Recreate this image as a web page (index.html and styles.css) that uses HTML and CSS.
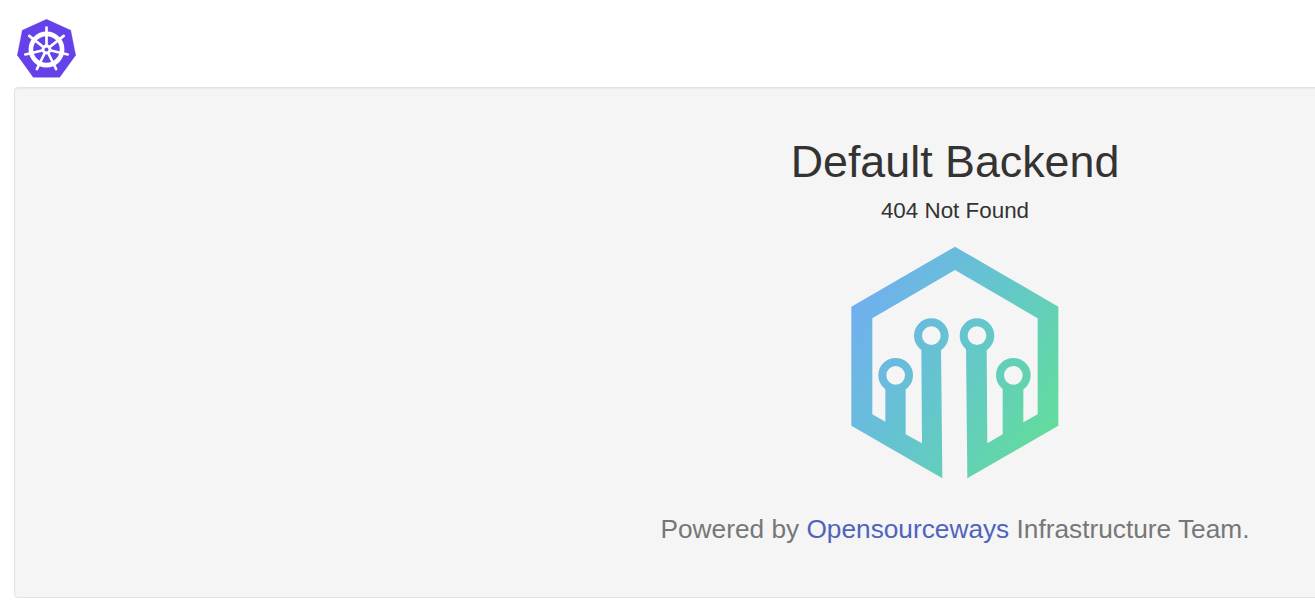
FILE: index.html
```html
<!DOCTYPE html>
<html lang="en">
<head>
<meta charset="utf-8">
<title>Default Backend</title>
<link rel="stylesheet" href="styles.css">
</head>
<body>
<header class="topbar">
  <svg class="k8s-logo" viewBox="51 56 178 178" aria-label="Kubernetes logo">
    <path class="k8s-hept" d="M140 57 L213 90 L228 165 L180 232 L100 232 L52 165 L67 90 Z"/>
    <circle class="k8s-ring" cx="140" cy="148" r="47"/>
    <g class="k8s-spokes">
      <path d="M140 148 V82"/>
      <path d="M140 148 L192 107"/>
      <path d="M140 148 L204 163"/>
      <path d="M140 148 L169 207"/>
      <path d="M140 148 L111 207"/>
      <path d="M140 148 L76 163"/>
      <path d="M140 148 L88 107"/>
    </g>
    <circle class="k8s-hub" cx="140" cy="148" r="15"/>
    <circle class="k8s-dot" cx="140" cy="148" r="6"/>
  </svg>
</header>
<main class="panel">
  <h1 class="title">Default Backend</h1>
  <p class="status">404 Not Found</p>
  <svg class="brand" viewBox="0 0 690 750" aria-label="Opensourceways logo">
    <defs>
      <linearGradient id="brandgrad" gradientUnits="userSpaceOnUse" x1="34" y1="215" x2="655" y2="572">
        <stop offset="0" stop-color="#70aff0"/>
        <stop offset="0.5" stop-color="#64c6cc"/>
        <stop offset="1" stop-color="#62dd9b"/>
      </linearGradient>
    </defs>
    <path fill="url(#brandgrad)" d="M345 35 L655 215 L655 572 L382 730 L378 330 L440 330 L442 625 L488 598 L488 450 L550 450 L550 562 L593 538 L593 250 L345 105 L97 250 L97 538 L136 560 L136 450 L197 450 L197 598 L246 625 L244 330 L303 330 L307 730 L34 572 L34 215 Z"/>
    <g class="brand-rings" stroke="url(#brandgrad)">
      <circle cx="274" cy="302" r="40"/>
      <circle cx="411" cy="302" r="40"/>
      <circle cx="167" cy="421" r="40"/>
      <circle cx="520" cy="421" r="40"/>
    </g>
  </svg>
  <p class="credit">Powered by <a class="credit-link" href="#">Opensourceways</a> Infrastructure Team.</p>
</main>
</body>
</html>
```
FILE: styles.css
```css
html, body {
  margin: 0;
  padding: 0;
  height: 100%;
  overflow: hidden;
  background: #fff;
  font-family: "Liberation Sans", Arial, sans-serif;
}

.topbar {
  height: 87px;
  box-sizing: border-box;
  padding: 19px 0 0 17px;
}

.k8s-logo {
  display: block;
  width: 59px;
  height: 59px;
}

.k8s-hept { fill: #6441e8; stroke: #6441e8; stroke-width: 1; stroke-linejoin: round; }
.k8s-ring { fill: none; stroke: #fff; stroke-width: 14; }
.k8s-spokes path { fill: none; stroke: #fff; stroke-width: 8; stroke-linecap: round; }
.k8s-hub { fill: #fff; }
.k8s-dot { fill: #6441e8; }

.panel {
  box-sizing: border-box;
  width: 1882px;
  height: 511px;
  margin-left: 14px;
  background: #f5f5f5;
  border: 1px solid #e3e3e3;
  border-radius: 4px;
  box-shadow: inset 0 1px 1px rgba(0, 0, 0, .05);
  display: flex;
  flex-direction: column;
  align-items: center;
  text-align: center;
}

.title {
  margin: 46px 0 0;
  font-size: 44.8px;
  font-weight: 400;
  line-height: 54px;
  color: #333;
}

.status {
  margin: 8px 0 0;
  font-size: 22.4px;
  line-height: 30px;
  color: #333;
}

.brand {
  display: block;
  width: 230px;
  height: 250px;
  margin-top: 9px;
}

.brand-rings circle { fill: none; stroke-width: 24; }

.credit {
  margin: 27px 0 0;
  font-size: 26.25px;
  line-height: 34px;
  color: #777;
}

.credit-link {
  color: #5063bc;
  text-decoration: none;
}
```
